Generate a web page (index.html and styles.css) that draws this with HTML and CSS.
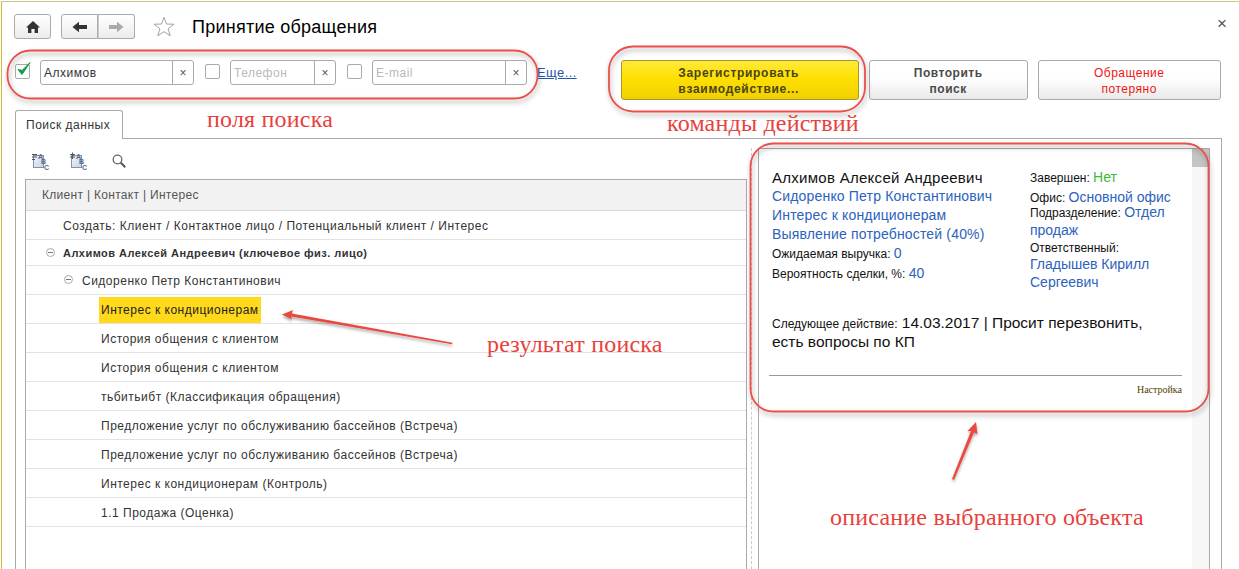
FILE: index.html
```html
<!DOCTYPE html>
<html lang="ru">
<head>
<meta charset="utf-8">
<title>Принятие обращения</title>
<link rel="stylesheet" href="styles.css">
</head>
<body>
<div class="app">
  <header class="titlebar">
    <button class="navbtn home" aria-label="Главная"><svg width="16" height="14" viewBox="0 0 16 14"><path d="M8 1 L15 7.5 H13 V13 H9.6 V9 H6.4 V13 H3 V7.5 H1 Z" fill="#333"/></svg></button>
    <div class="navgroup">
      <button class="navbtn back" aria-label="Назад"><svg width="16" height="12" viewBox="0 0 16 12"><path d="M0.5 6 L7 0.8 V4 H15 V8 H7 V11.2 Z" fill="#333"/></svg></button>
      <button class="navbtn forward" aria-label="Вперёд"><svg width="16" height="12" viewBox="0 0 16 12"><path d="M15.5 6 L9 0.8 V4 H1 V8 H9 V11.2 Z" fill="#aaa"/></svg></button>
    </div>
    <svg class="star" width="22" height="21" viewBox="0 0 24 23"><path d="M12 1.5 L14.8 8.8 L22.8 9 L16.5 13.9 L18.8 21.6 L12 17.2 L5.2 21.6 L7.5 13.9 L1.2 9 L9.2 8.8 Z" fill="none" stroke="#9a9a9a" stroke-width="1"/></svg>
    <h1 class="title">Принятие обращения</h1>
    <span class="close">×</span>
  </header>

  <section class="actions">
    <div class="filters">
      <span class="check checked"><svg width="17" height="17" viewBox="0 0 17 17"><path d="M3 8.5 L7 13.5 L15 1.5 L7.2 9.4 Z" fill="#0f9b48" stroke="#0f9b48" stroke-width="1"/></svg></span>
      <div class="field f1"><span class="value">Алхимов</span><span class="clear">×</span></div>
      <span class="check"></span>
      <div class="field f2"><span class="value ph">Телефон</span><span class="clear">×</span></div>
      <span class="check"></span>
      <div class="field f3"><span class="value ph">E-mail</span><span class="clear">×</span></div>
      <a class="more" href="#">Еще...</a>
    </div>
    <div class="commands">
      <button class="cmd primary">Зарегистрировать<br>взаимодействие...</button>
      <button class="cmd repeat">Повторить<br>поиск</button>
      <button class="cmd lost">Обращение<br>потеряно</button>
    </div>
  </section>

  <nav class="tabs"><div class="tab">Поиск данных</div></nav>

  <section class="panel">
    <div class="toolbar">
      <svg width="18" height="18" viewBox="0 0 18 18"><defs><linearGradient id="pg" x1="0" y1="0" x2="1" y2="1"><stop offset="0" stop-color="#eef3fa"/><stop offset="1" stop-color="#c3d4ea"/></linearGradient></defs><rect x="2.500" y="3.500" width="10" height="12" fill="url(#pg)" stroke="#7f93ad"/><path d="M1 2.500h5M1 5h5M1 7.500h3" stroke="#555"/><text x="7" y="6.500" class="ico">A</text><text x="10" y="12" class="ico">B</text><text x="13" y="17.500" class="ico">C</text></svg>
      <svg width="18" height="18" viewBox="0 0 18 18"><rect x="2.500" y="3.500" width="10" height="12" fill="url(#pg)" stroke="#7f93ad"/><path d="M1 2.500h5M1 5h5M3.500 .5v6.500" stroke="#555"/><text x="7" y="6.500" class="ico">A</text><text x="10" y="12" class="ico">B</text><text x="13" y="17.500" class="ico">C</text></svg>
      <svg class="search-ico" width="16" height="16" viewBox="0 0 16 16"><circle cx="6.500" cy="6.500" r="4.300" fill="none" stroke="#666" stroke-width="1.300"/><path d="M9.800 9.800 L14.300 14.300" stroke="#555" stroke-width="2"/></svg>
    </div>
    <div class="table">
      <div class="thead">Клиент | Контакт | Интерес</div>
      <div class="row r29 lvl0">Создать: Клиент / Контактное лицо / Потенциальный клиент / Интерес</div>
      <div class="row r26 lvl0 bold"><i class="toggle t0"></i>Алхимов Алексей Андреевич (ключевое физ. лицо)</div>
      <div class="row r29 lvl1"><i class="toggle t1"></i>Сидоренко Петр Константинович</div>
      <div class="row r29 lvl2"><span class="mark">Интерес к кондиционерам</span></div>
      <div class="row r29 lvl2">История общения с клиентом</div>
      <div class="row r29 lvl2">История общения с клиентом</div>
      <div class="row r29 lvl2">тьбитьибт (Классификация обращения)</div>
      <div class="row r29 lvl2">Предложение услуг по обслуживанию бассейнов (Встреча)</div>
      <div class="row r29 lvl2">Предложение услуг по обслуживанию бассейнов (Встреча)</div>
      <div class="row r29 lvl2">Интерес к кондиционерам (Контроль)</div>
      <div class="row r29 lvl2">1.1 Продажа (Оценка)</div>
    </div>
    <div class="splitter"></div>
    <aside class="detail">
      <div class="detail-body">
        <div class="columns">
          <div class="col-left">
            <div class="big name">Алхимов Алексей Андреевич</div>
            <div class="big link">Сидоренко Петр Константинович</div>
            <div class="big link">Интерес к кондиционерам</div>
            <div class="big link">Выявление потребностей (40%)</div>
            <div class="small-line">Ожидаемая выручка: <span class="link big-inline">0</span></div>
            <div class="small-line">Вероятность сделки, %: <span class="link big-inline">40</span></div>
          </div>
          <div class="col-right">
            <div class="r-line">Завершен: <span class="green big-inline">Нет</span></div>
            <div class="r-line">Офис: <span class="link big-inline">Основной офис</span></div>
            <div class="r-line tight">Подразделение: <span class="link big-inline">Отдел продаж</span></div>
            <div class="r-label">Ответственный:</div>
            <div class="r-name link">Гладышев Кирилл Сергеевич</div>
          </div>
        </div>
        <p class="next"><span class="next-label">Следующее действие:</span> 14.03.2017 | Просит перезвонить, есть вопросы по КП</p>
        <div class="settings"><span>Настройка</span></div>
      </div>
      <div class="scrollbar"><div class="thumb"></div></div>
    </aside>
  </section>
</div>

<svg class="marks" width="1239" height="569" viewBox="0 0 1239 569">
  <defs>
    <filter id="sh" x="-5%" y="-20%" width="110%" height="140%"><feDropShadow dx="1" dy="3" stdDeviation="2.500" flood-color="#000" flood-opacity=".35"/></filter>
    <filter id="sh2" x="-20%" y="-20%" width="140%" height="140%"><feDropShadow dx="0" dy="2" stdDeviation="1.500" flood-color="#000" flood-opacity=".35"/></filter>
  </defs>
  <g fill="none" stroke="#ea4f49" stroke-width="1.800" filter="url(#sh)">
    <rect x="7.500" y="50.500" width="530" height="48" rx="23"/>
    <rect x="609" y="46.500" width="256" height="65" rx="24"/>
    <rect x="750.500" y="143.500" width="458" height="268" rx="23"/>
  </g>
  <g filter="url(#sh2)" fill="#ea4a42">
    <path d="M452 344.300 L291 316.500 L292 319.600 L282 314.500 L293 310 L291.800 313.400 L452.500 342.800 Z"/>
    <path d="M952 479 L971 431 L967.500 431 L976 422 L977.500 434 L974 432.500 L954 480 Z"/>
  </g>
</svg>
<span class="note n1">поля поиска</span>
<span class="note n2">команды действий</span>
<span class="note n3">результат поиска</span>
<span class="note n4">описание выбранного объекта</span>
</body>
</html>
```
FILE: styles.css
```css
* { box-sizing: border-box; }
html, body { margin: 0; height: 569px; overflow: hidden; background: #fff; }
body { position: relative; padding: 1px 0 0 1px; font-family: "Liberation Sans", Arial, sans-serif; font-size: 12px; color: #333; }
button { font-family: inherit; padding: 0; margin: 0; cursor: default; }

.app {
  height: 568px;
  border-left: 1px solid #d4b82e;
  border-top: 1px solid #cfc68e;
  padding: 12px 17px 0 13px;
  display: flex;
  flex-direction: column;
  overflow: hidden;
}

/* title bar */
.titlebar { display: flex; align-items: center; height: 25px; margin-left: -1px; flex: none; }
.navbtn {
  height: 25px;
  display: flex;
  align-items: center;
  justify-content: center;
  border: 1px solid #aaa;
  border-radius: 3px;
  background: linear-gradient(#fff, #ececec);
}
.home { width: 37px; }
.navgroup { display: flex; margin-left: 10px; width: 74px; }
.back { width: 37px; border-radius: 3px 0 0 3px; }
.forward { width: 37px; border-left: 0; border-radius: 0 3px 3px 0; box-shadow: inset 1px 0 0 #ccc; }
.star { margin-left: 18px; }
.title { margin: 2px 0 0 17px; font-size: 18px; font-weight: 400; color: #000; letter-spacing: .25px; }
.close { margin-left: auto; margin-right: -5px; font-size: 17px; color: #555; margin-top: -6px; }

/* action row */
.actions { display: flex; margin-top: 21px; height: 40px; flex: none; margin-left: -1px; }
.filters { display: flex; align-items: flex-start; height: 25px; }
.check {
  width: 15px;
  height: 15px;
  margin-top: 4px;
  margin-left: 1px;
  border: 1px solid #aaa;
  border-radius: 2px;
  position: relative;
  flex: none;
}
.check svg { position: absolute; left: -1px; top: -4px; }
.field {
  display: flex;
  height: 25px;
  border: 1px solid #aaa;
  border-radius: 3px;
  margin-left: 10px;
  margin-right: 10px;
  background: #fff;
  flex: none;
}
.f1 { width: 154px; }
.f2 { width: 106px; }
.f3 { width: 155px; }
.value { flex: 1; padding-left: 3px; line-height: 24px; font-size: 12px; letter-spacing: .5px; color: #333; }
.ph { color: #b9b9b9; }
.clear { width: 21px; border-left: 1px solid #aaa; text-align: center; line-height: 24px; font-size: 12px; color: #555; flex: none; }
.more { color: #1f56ad; font-size: 13px; line-height: 25px; letter-spacing: .4px; text-decoration: underline; }

.commands { display: flex; margin-left: 44px; gap: 10px; }
.cmd {
  height: 40px;
  padding-top: 2px;
  border: 1px solid #aaa;
  border-radius: 3px;
  background: linear-gradient(#fff 45%, #e9e9e9);
  font-size: 12px;
  line-height: 16px;
  letter-spacing: .5px;
  text-align: center;
  color: #4a4a4a;
}
.primary {
  width: 238px;
  padding-right: 2px;
  border-color: #a8952e;
  background: linear-gradient(#ffe93a, #ffe000 45%, #f1d000);
  font-weight: 700;
  letter-spacing: .7px;
  color: #4b4415;
}
.repeat { width: 159px; font-weight: 700; }
.lost { width: 183px; color: #f01515; }

/* tabs */
.tabs { margin-top: 10px; height: 28px; flex: none; }
.tab {
  width: 108px;
  height: 29px;
  border: 1px solid #aaa;
  border-bottom: 0;
  border-radius: 3px 3px 0 0;
  background: #fff;
  padding-left: 10px;
  line-height: 28px;
  letter-spacing: .5px;
  position: relative;
  z-index: 1;
}

/* panel */
.panel {
  flex: 1;
  min-height: 0;
  border: 1px solid #aaa;
  border-bottom: 0;
  padding: 9px 0 0 9px;
  display: grid;
  grid-template-columns: 722px 11px 452px;
  grid-template-rows: 31px 1fr;
}
.toolbar { grid-column: 1; grid-row: 1; display: flex; align-items: center; gap: 20px; padding: 0 0 5px 6px; }
.search-ico { margin-left: 4px; }
.ico { font: 700 7px "Liberation Sans", sans-serif; fill: #5a6a80; }

.table { grid-column: 1; grid-row: 2; border: 1px solid #aaa; border-bottom: 0; min-height: 0; }
.thead {
  height: 31px;
  background: #f2f2f2;
  border-bottom: 1px solid #d9d9d9;
  padding-left: 16px;
  line-height: 30px;
  letter-spacing: .3px;
  color: #555;
}
.row {
  display: flex;
  align-items: center;
  padding-top: 1px;
  border-bottom: 1px solid #e2e2e2;
  letter-spacing: .5px;
  white-space: nowrap;
  position: relative;
}
.r29 { height: 29px; }
.r26 { height: 26px; }
.lvl0 { padding-left: 37px; }
.lvl1 { padding-left: 56px; }
.lvl2 { padding-left: 75px; }
.bold { font-weight: 700; font-size: 11px; letter-spacing: .46px; }
.toggle {
  position: absolute;
  top: 50%;
  width: 9px;
  height: 9px;
  margin-top: -5px;
  border: 1px solid #aaa;
  border-radius: 50%;
}
.toggle::after { content: ""; position: absolute; left: 1px; right: 1px; top: 3px; height: 1px; background: #777; }
.t0 { left: 20px; }
.t1 { left: 38px; }
.mark { background: #ffd91a; color: #222; padding: 0 2px; margin-left: -2px; height: 26px; line-height: 26px; }

.splitter { grid-column: 2; grid-row: 1 / 3; width: 1px; margin-left: 4px; border-left: 1px dashed #ccc; }

.detail { grid-column: 3; grid-row: 1 / 3; display: flex; border: 1px solid #aaa; border-bottom: 0; min-height: 0; }
.detail-body { width: 433px; padding: 19px 10px 0 10px; color: #111; }
.scrollbar { width: 17px; background: #f7f7f7; }
.thumb { height: 18px; background: #c4c4c4; }

.columns { display: flex; padding-left: 3px; }
.col-left { width: 258px; flex: none; }
.col-right { width: 152px; flex: none; font-size: 12px; }
.big { font-size: 14px; line-height: 19px; letter-spacing: .17px; }
.name { font-size: 15px; letter-spacing: .28px; }
.big-inline { font-size: 14px; }
.small-line { font-size: 12px; line-height: 19px; }
.link { color: #2d62bd; }
.green { color: #3fba3f; }
.r-line { line-height: 19px; }
.r-line.tight { line-height: 17px; margin-top: -4px; }
.r-label { line-height: 16px; margin-top: 0; }
.r-name { font-size: 14px; line-height: 18px; margin-top: -1px; }
.next { margin: 23px 0 0 3px; font-size: 15.5px; line-height: 18px; width: 400px; }
.next-label { font-size: 12px; }
.settings {
  margin-top: 24px;
  border-top: 1px solid #999;
  padding-top: 8px;
  text-align: right;
  width: 413px;
  font: 10px/12px "Liberation Serif", serif;
  color: #4f3d00;
}

/* annotations drawn over the page */
.marks { position: absolute; left: 0; top: 0; pointer-events: none; }
.note { position: absolute; font: 24px/24px "Liberation Serif", serif; letter-spacing: .2px; color: #e8413c; white-space: nowrap; }
.n1 { left: 207px; top: 107px; }
.n2 { left: 667px; top: 111px; }
.n3 { left: 487px; top: 332px; }
.n4 { left: 830px; top: 505px; }
```
